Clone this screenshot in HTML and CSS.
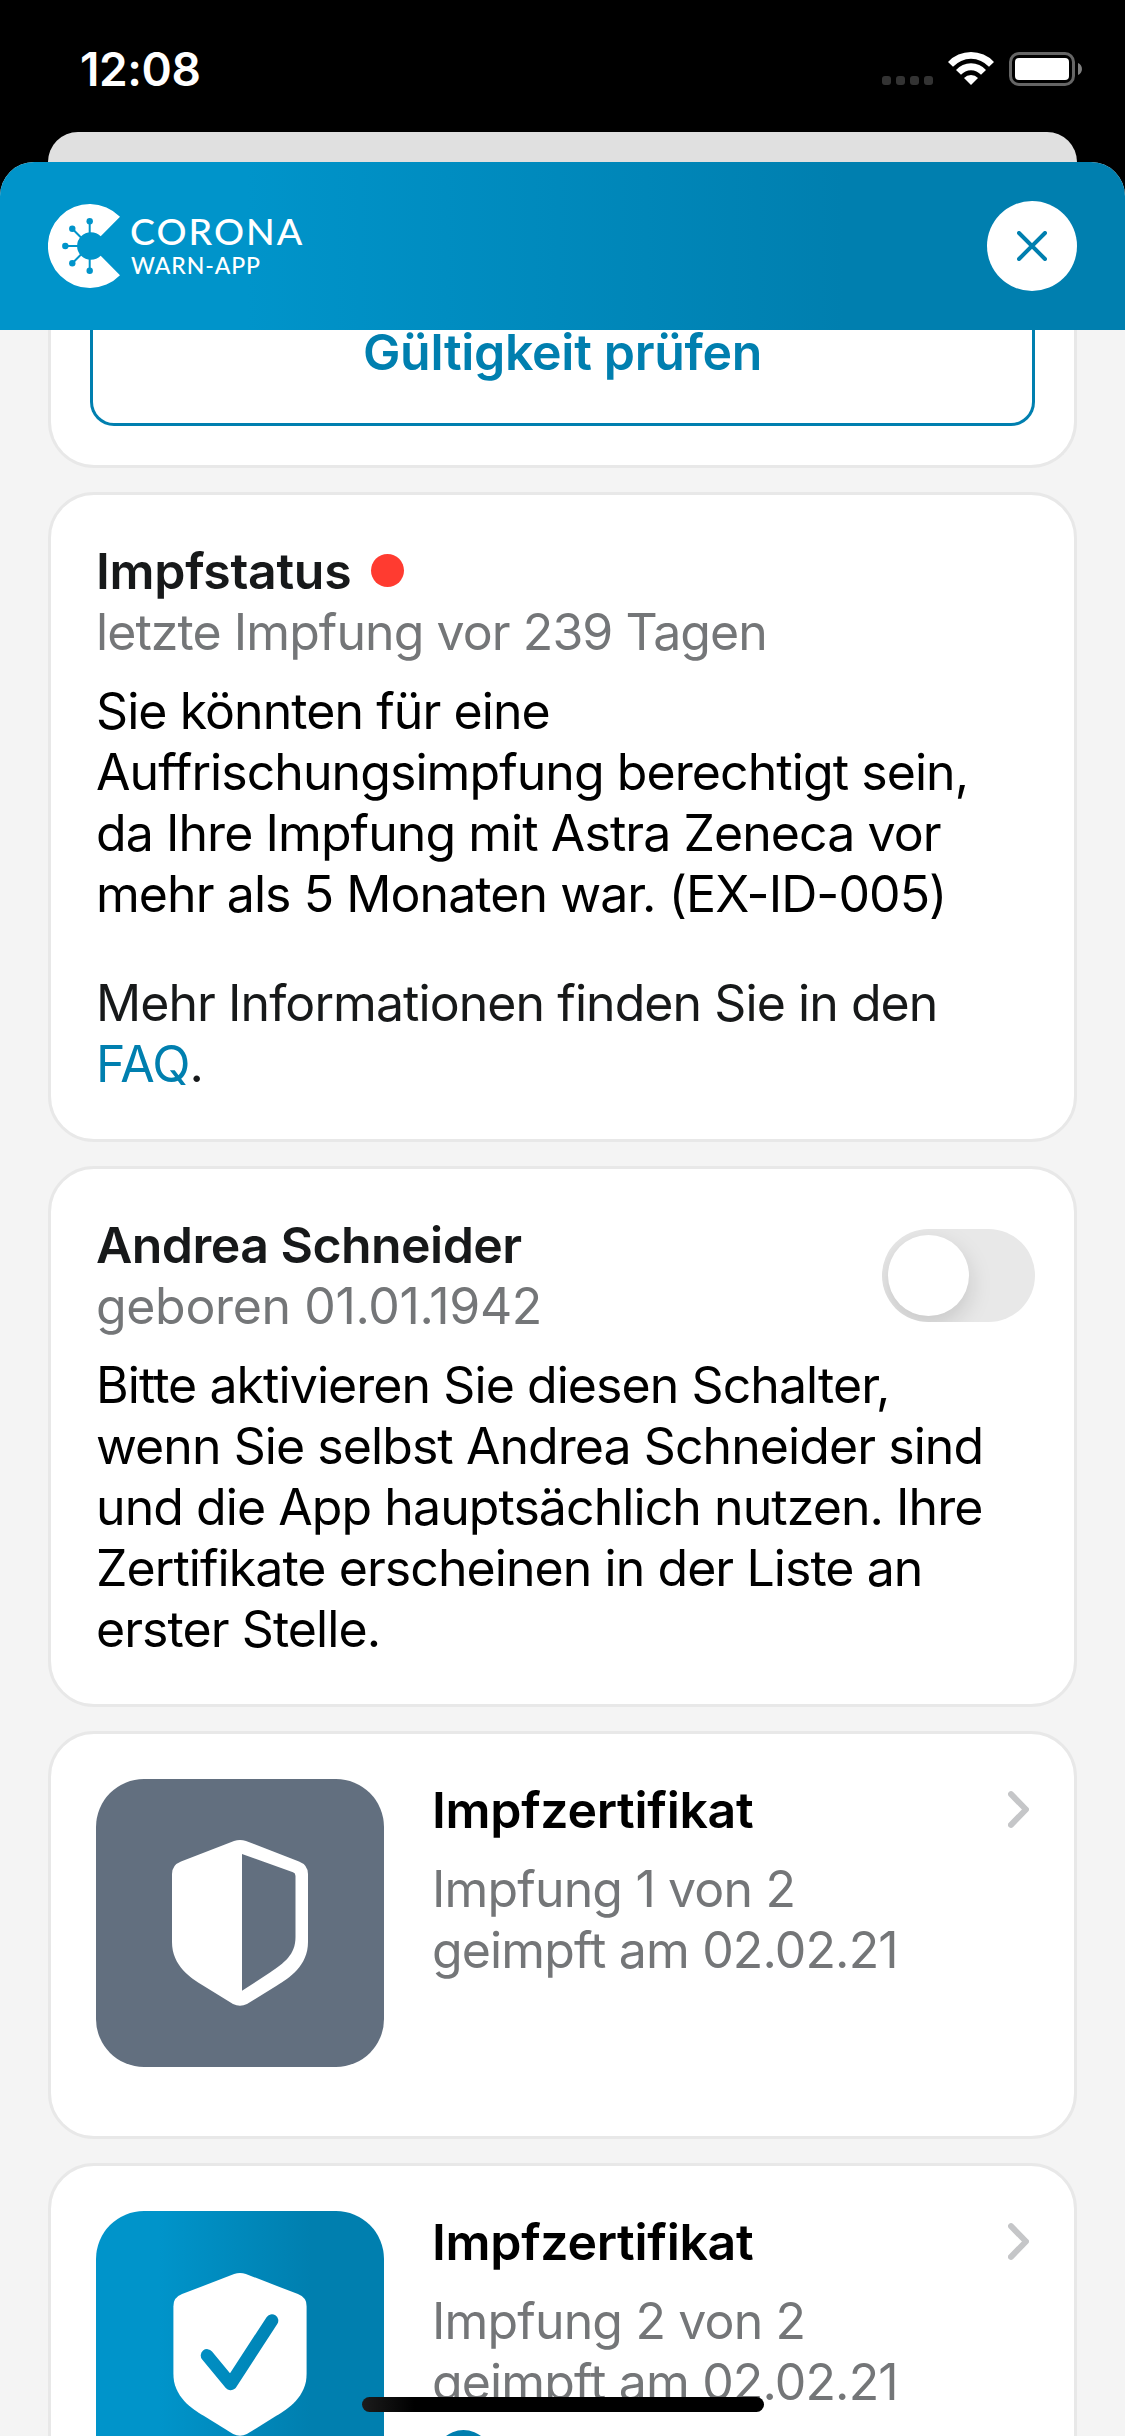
FILE: index.html
```
<!DOCTYPE html>
<html lang="de">
<head>
<meta charset="utf-8">
<title>Corona-Warn-App</title>
<link rel="stylesheet" href="styles.css">
</head>
<body>
<div class="screen">
  <div class="status-bar">
    <span class="time">12:08</span>
    <div class="status-icons">
      <div class="signal"><i></i><i></i><i></i><i></i></div>
      <svg class="wifi" width="46" height="33" viewBox="0 0 46 33" fill="#fff">
        <path d="M0 10A31.5 31.5 0 0 1 46 10L41 14.7A24.5 24.5 0 0 0 5 14.7Z"/>
        <path d="M8 18A20 20 0 0 1 38 18L33 22.8A13.2 13.2 0 0 0 13 22.8Z"/>
        <path d="M16 26A9.7 9.7 0 0 1 30 26L23 33Z"/>
      </svg>
      <div class="battery"><div class="battery-level"></div></div>
      <svg class="battery-cap" width="4" height="12" viewBox="0 0 4 12"><path d="M0 0C5.3 2 5.3 10 0 12Z" fill="#808080"/></svg>
    </div>
  </div>
  <div class="backdrop"></div>
  <div class="sheet">
    <header class="header">
      <div class="logo">
        <svg width="72" height="84" viewBox="0 0 72 84">
          <path d="M72 12.7A42 42 0 1 0 72 71.3L52.7 51.7A13.8 13.8 0 1 1 52.7 32.3Z" fill="#fff"/>
          <g stroke="#0094ca" stroke-width="2">
            <path d="M41.7 30V17M41.7 54V67M30 42H17M33 33.5L24.3 24.7M33 50.5L24.3 59.3"/>
          </g>
          <g fill="#0094ca">
            <circle cx="41.7" cy="17.3" r="3.2"/><circle cx="24.3" cy="24.7" r="3.2"/><circle cx="17.3" cy="42" r="3.2"/><circle cx="24.3" cy="59.3" r="3.2"/><circle cx="41.7" cy="66.7" r="3.2"/>
          </g>
        </svg>
        <div class="logo-text"><span class="logo-main">CORONA</span><span class="logo-sub">WARN-APP</span></div>
      </div>
      <button class="close" aria-label="Schließen">
        <svg width="30" height="30" viewBox="0 0 30 30"><path d="M2 2L28 28M28 2L2 28" stroke="#007faf" stroke-width="4" stroke-linecap="round"/></svg>
      </button>
    </header>
    <main class="content">
      <section class="card card-check">
        <button class="outline-button">Gültigkeit prüfen</button>
      </section>

      <section class="card">
        <h2 class="title dark">Impfstatus<span class="dot"></span></h2>
        <p class="text muted">letzte Impfung vor 239 Tagen</p>
        <p class="text body">Sie könnten für eine<br>Auffrischungsimpfung berechtigt sein,<br>da Ihre Impfung mit Astra Zeneca vor<br>mehr als 5 Monaten war. (EX-ID-005)</p>
        <p class="text more">Mehr Informationen finden Sie in den<br><a class="link">FAQ</a>.</p>
      </section>

      <section class="card">
        <div class="person">
          <div>
            <h2 class="title dark name">Andrea Schneider</h2>
            <p class="text muted born">geboren 01.01.1942</p>
          </div>
          <div class="switch"><div class="knob"></div></div>
        </div>
        <p class="text body">Bitte aktivieren Sie diesen Schalter,<br>wenn Sie selbst Andrea Schneider sind<br>und die App hauptsächlich nutzen. Ihre<br>Zertifikate erscheinen in der Liste an<br>erster Stelle.</p>
      </section>

      <section class="card certificate">
        <div class="tile tile-gray">
          <svg width="136" height="166" viewBox="0 0 136 166">
            <path fill="#fff" fill-rule="evenodd" d="M68 0C70 0 72 .3 74 1L127 21.5Q136 25 136 34V102C136 126 117 138 105 145.5L75 164Q68 167.5 61 164L31 145.5C19 138 0 126 0 102V34Q0 25 9 21.5L62 1C64 .3 66 0 68 0ZM70 14V150.8L98 132.5C112 123 123.5 115 123.5 97V36Q123.5 33 121 32.2Z"/>
          </svg>
        </div>
        <div class="cert-info">
          <div class="cert-head">
            <h2 class="title">Impfzertifikat</h2>
            <svg class="chevron" width="21" height="37" viewBox="0 0 21 37"><path d="M3 3.2L18 18.5L3 33.8" fill="none" stroke="#c5c6c8" stroke-width="6" stroke-linecap="round" stroke-linejoin="round"/></svg>
          </div>
          <p class="text muted spaced">Impfung 1 von 2<br>geimpft am 02.02.21</p>
        </div>
      </section>

      <section class="card certificate">
        <div class="tile tile-blue">
          <svg width="134" height="163" viewBox="0 0 136 166">
            <mask id="check"><rect width="136" height="166" fill="#fff"/><path d="M34.5 84L58.5 113L100.5 48.5" fill="none" stroke="#000" stroke-width="13" stroke-linecap="round" stroke-linejoin="round"/></mask>
            <path fill="#fff" mask="url(#check)" d="M68 0C70 0 72 .3 74 1L127 21.5Q136 25 136 34V102C136 126 117 138 105 145.5L75 164Q68 167.5 61 164L31 145.5C19 138 0 126 0 102V34Q0 25 9 21.5L62 1C64 .3 66 0 68 0Z"/>
          </svg>
        </div>
        <div class="cert-info">
          <div class="cert-head">
            <h2 class="title">Impfzertifikat</h2>
            <svg class="chevron" width="21" height="37" viewBox="0 0 21 37"><path d="M3 3.2L18 18.5L3 33.8" fill="none" stroke="#c5c6c8" stroke-width="6" stroke-linecap="round" stroke-linejoin="round"/></svg>
          </div>
          <p class="text muted spaced">Impfung 2 von 2<br>geimpft am 02.02.21</p>
          <div class="badge"></div>
        </div>
      </section>
    </main>
  </div>
  <div class="home-indicator"></div>
</div>
</body>
</html>
```
FILE: styles.css
```
* { box-sizing: border-box; }

body, h2, p { margin: 0; }

body {
  background: #000;
  font-family: Inter, "Liberation Sans", sans-serif;
}

svg { display: block; }

button {
  border: 0;
  padding: 0;
  font-family: inherit;
}

.screen {
  position: relative;
  display: flex;
  flex-direction: column;
  width: 1125px;
  height: 2436px;
  overflow: hidden;
}

/* Status bar */
.status-bar {
  display: flex;
  justify-content: space-between;
  height: 132px;
  padding: 52px 43px 0 80px;
  flex: none;
}

.time {
  color: #fff;
  font-size: 46px;
  font-weight: 600;
  line-height: 34px;
  letter-spacing: -0.4px;
}

.status-icons { display: flex; height: 34px; }

.signal {
  display: flex;
  gap: 5px;
  align-self: flex-end;
  padding-bottom: 1px;
  margin-right: 15px;
}

.signal i {
  width: 9px;
  height: 9px;
  border-radius: 3px;
  background: #333;
}

.wifi { margin-right: 15px; }

.battery {
  width: 66px;
  height: 34px;
  padding: 3px;
  border: 3px solid #666;
  border-radius: 10px;
}

.battery-level {
  height: 22px;
  border-radius: 4px;
  background: #fff;
}

.battery-cap { margin: 11px 0 0 3px; }

/* Sheet */
.backdrop {
  flex: none;
  height: 30px;
  margin: 0 48px;
  border-radius: 30px 30px 0 0;
  background: #e0e0e0;
}

.sheet {
  flex: 1;
  min-height: 0;
  display: flex;
  flex-direction: column;
  overflow: hidden;
  border-radius: 34px 34px 0 0;
  background: #f4f4f4;
}

.header {
  flex: none;
  display: flex;
  align-items: center;
  justify-content: space-between;
  height: 168px;
  padding: 0 48px;
  background: linear-gradient(90deg, #0094ca 22%, #007faf 75%);
}

.logo { display: flex; gap: 10px; color: #fff; }

.logo-text {
  display: flex;
  flex-direction: column;
  gap: 2px;
  padding-top: 6px;
  font-family: Lato, "Liberation Sans", sans-serif;
}

.logo-main {
  font-size: 37.5px;
  font-weight: 500;
  line-height: 41px;
  letter-spacing: 2px;
}

.logo-sub {
  padding-left: 1px;
  font-size: 23px;
  font-weight: 500;
  line-height: 24px;
  letter-spacing: 0.9px;
}

.close {
  display: flex;
  align-items: center;
  justify-content: center;
  width: 90px;
  height: 90px;
  border-radius: 50%;
  background: #fff;
}

/* Cards */
.content {
  display: flex;
  flex-direction: column;
  gap: 24px;
  padding: 0 48px;
}

.card {
  flex: none;
  padding: 45px 45px 44.2px;
  border: 3px solid #e8e8e8;
  border-radius: 46px;
  background: #fff;
  white-space: nowrap;
}

.card-check {
  height: 138px;
  padding: 0 39px;
  border-top: 0;
  border-radius: 0 0 46px 46px;
}

.outline-button {
  display: block;
  width: 100%;
  height: 96px;
  padding-bottom: 48px;
  border: 3px solid #007faf;
  border-top: 0;
  border-radius: 0 0 24px 24px;
  background: none;
  color: #007faf;
  font-size: 50px;
  font-weight: 600;
  line-height: 45px;
  letter-spacing: -0.3px;
}

.title {
  display: flex;
  align-items: center;
  padding-top: 1px;
  color: #000;
  font-size: 50px;
  font-weight: 600;
  line-height: 60.9px;
  letter-spacing: -0.3px;
}

.dark { color: #17191a; }

.name { letter-spacing: -0.55px; }

.dot {
  width: 33px;
  height: 33px;
  margin: 0 0 2px 20px;
  border-radius: 50%;
  background: #ff3b30;
}

.text {
  font-size: 50px;
  line-height: 60.9px;
  letter-spacing: -0.93px;
}

.muted { color: #747678; }

.born { letter-spacing: -0.35px; }

.body { margin-top: 18.2px; }

.more {
  margin-top: 48.5px;
  color: #17191a;
}

.link { color: #007faf; letter-spacing: -0.8px; }

.person { display: flex; justify-content: space-between; }

.switch {
  width: 153px;
  height: 93px;
  margin: 15px -6px 0 0;
  padding: 6px;
  border-radius: 47px;
  background: #e8e8e8;
  overflow: hidden;
}

.knob {
  width: 81px;
  height: 81px;
  border-radius: 50%;
  background: #fff;
  box-shadow: 0 9px 24px rgba(0, 0, 0, 0.15);
}

/* Certificates */
.certificate {
  display: flex;
  gap: 48px;
  height: 408px;
}

.tile {
  flex: none;
  display: flex;
  align-items: center;
  justify-content: center;
  width: 288px;
  height: 288px;
  border-radius: 48px;
}

.tile-gray { background: #626f7f; }

.tile-blue { background: linear-gradient(90deg, #0094ca 22%, #007faf 75%); }

.cert-info { flex: 1; }

.cert-head {
  display: flex;
  align-items: center;
  justify-content: space-between;
}

.spaced { margin-top: 18px; letter-spacing: -0.85px; }

.badge {
  width: 57px;
  height: 57px;
  margin: 17px 0 0 3px;
  border-radius: 50%;
  background: #007faf;
}

.home-indicator {
  position: absolute;
  left: 362px;
  bottom: 24px;
  width: 402px;
  height: 15px;
  border-radius: 8px;
  background: linear-gradient(90deg, #1c1c1c, #000 13%);
}
```
